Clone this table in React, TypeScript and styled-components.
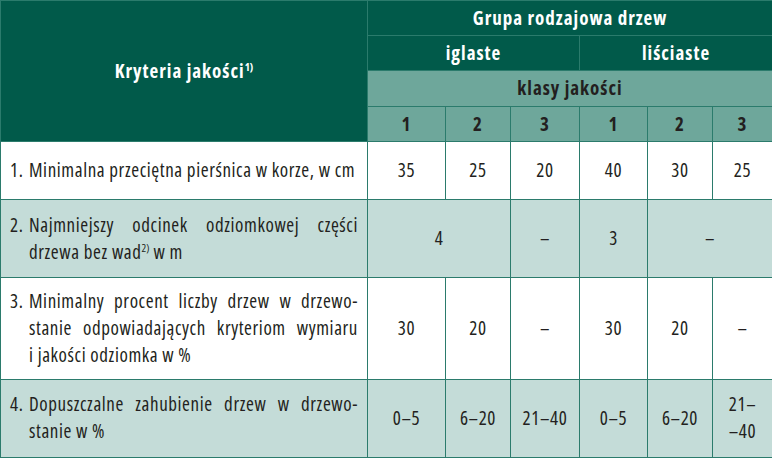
import React from "react";
import styled, { createGlobalStyle } from "styled-components";

const GlobalStyle = createGlobalStyle`
  html, body {
    margin: 0;
    padding: 0;
    background: #ffffff;
  }
  body {
    font-family: "Open Sans", "Liberation Sans", sans-serif;
    font-stretch: 75%;
    color: #231f20;
  }
`;

const Table = styled.table`
  width: 772px;
  height: 458px;
  border-collapse: collapse;
  table-layout: fixed;
  font-size: 19px;
  letter-spacing: 0.6px;
`;

const HeadCell = styled.th<{ $tone: "dark" | "mid" }>`
  background: ${(p) => (p.$tone === "dark" ? "#015a4a" : "#6ea79b")};
  color: ${(p) => (p.$tone === "dark" ? "#ffffff" : "#231f20")};
  border: 1.5px solid #2b7b6c;
  font-weight: 700;
  font-size: 19px;
  letter-spacing: 1px;
  text-align: center;
  padding: 0;
  line-height: 1;
`;

const Row = styled.tr<{ $shaded?: boolean; $h: number }>`
  height: ${(p) => p.$h}px;
  background: ${(p) => (p.$shaded ? "#c4dcd8" : "#ffffff")};
`;

const HeadRow = styled.tr<{ $h: number }>`
  height: ${(p) => p.$h}px;
`;

const Cell = styled.td`
  border: 1.5px solid #2b7b6c;
  text-align: center;
  padding: 0 4px;
  line-height: 27px;
`;

const LabelCell = styled.td`
  border: 1.5px solid #2b7b6c;
  padding: 0 9px 0 9px;
  line-height: 27px;
`;

const Label = styled.div`
  display: flex;
`;

const Num = styled.span`
  flex: none;
  width: 19px;
`;

const Lines = styled.div`
  flex: 1;
`;

const Line = styled.div<{ $justify?: boolean }>`
  text-align: ${(p) => (p.$justify ? "justify" : "left")};
  text-align-last: ${(p) => (p.$justify ? "justify" : "left")};
`;

const Sup = styled.sup`
  font-size: 11px;
  letter-spacing: 0;
  line-height: 0;
  vertical-align: 7px;
`;

const cols = [367, 78, 65, 69, 68, 65, 60];

type Body = {
  n: string;
  lines: React.ReactNode[];
  h: number;
  shaded?: boolean;
  cells: { v: React.ReactNode; span?: number }[];
};

const rows: Body[] = [
  {
    n: "1.",
    lines: ["Minimalna przeciętna pierśnica w korze, w cm"],
    h: 58,
    cells: ["35", "25", "20", "40", "30", "25"].map((v) => ({ v })),
  },
  {
    n: "2.",
    lines: [
      "Najmniejszy odcinek odziomkowej części",
      <>
        drzewa bez wad<Sup>2)</Sup> w m
      </>,
    ],
    h: 78,
    shaded: true,
    cells: [
      { v: "4", span: 2 },
      { v: "–" },
      { v: "3" },
      { v: "–", span: 2 },
    ],
  },
  {
    n: "3.",
    lines: [
      "Minimalny procent liczby drzew w drzewo-",
      "stanie odpowiadających kryteriom wymiaru",
      "i jakości odziomka w %",
    ],
    h: 101,
    cells: ["30", "20", "–", "30", "20", "–"].map((v) => ({ v })),
  },
  {
    n: "4.",
    lines: ["Dopuszczalne zahubienie drzew w drzewo-", "stanie w %"],
    h: 78,
    shaded: true,
    cells: [
      { v: "0–5" },
      { v: "6–20" },
      { v: "21–40" },
      { v: "0–5" },
      { v: "6–20" },
      {
        v: (
          <>
            21–
            <br />
            –40
          </>
        ),
      },
    ],
  },
];

export default function App() {
  return (
    <>
      <GlobalStyle />
      <Table>
        <colgroup>
          {cols.map((w, i) => (
            <col key={i} style={{ width: w }} />
          ))}
        </colgroup>
        <thead>
          <HeadRow $h={35}>
            <HeadCell $tone="dark" rowSpan={4}>
              Kryteria jakości<Sup>1)</Sup>
            </HeadCell>
            <HeadCell $tone="dark" colSpan={6}>
              Grupa rodzajowa drzew
            </HeadCell>
          </HeadRow>
          <HeadRow $h={35}>
            <HeadCell $tone="dark" colSpan={3}>
              iglaste
            </HeadCell>
            <HeadCell $tone="dark" colSpan={3}>
              liściaste
            </HeadCell>
          </HeadRow>
          <HeadRow $h={36}>
            <HeadCell $tone="mid" colSpan={6}>
              klasy jakości
            </HeadCell>
          </HeadRow>
          <HeadRow $h={35}>
            {["1", "2", "3", "1", "2", "3"].map((v, i) => (
              <HeadCell key={i} $tone="mid">
                {v}
              </HeadCell>
            ))}
          </HeadRow>
        </thead>
        <tbody>
          {rows.map((r) => (
            <Row key={r.n} $h={r.h} $shaded={r.shaded}>
              <LabelCell>
                <Label>
                  <Num>{r.n}</Num>
                  <Lines>
                    {r.lines.map((l, i) => (
                      <Line key={i} $justify={i < r.lines.length - 1}>
                        {l}
                      </Line>
                    ))}
                  </Lines>
                </Label>
              </LabelCell>
              {r.cells.map((c, i) => (
                <Cell key={i} colSpan={c.span}>
                  {c.v}
                </Cell>
              ))}
            </Row>
          ))}
        </tbody>
      </Table>
    </>
  );
}
